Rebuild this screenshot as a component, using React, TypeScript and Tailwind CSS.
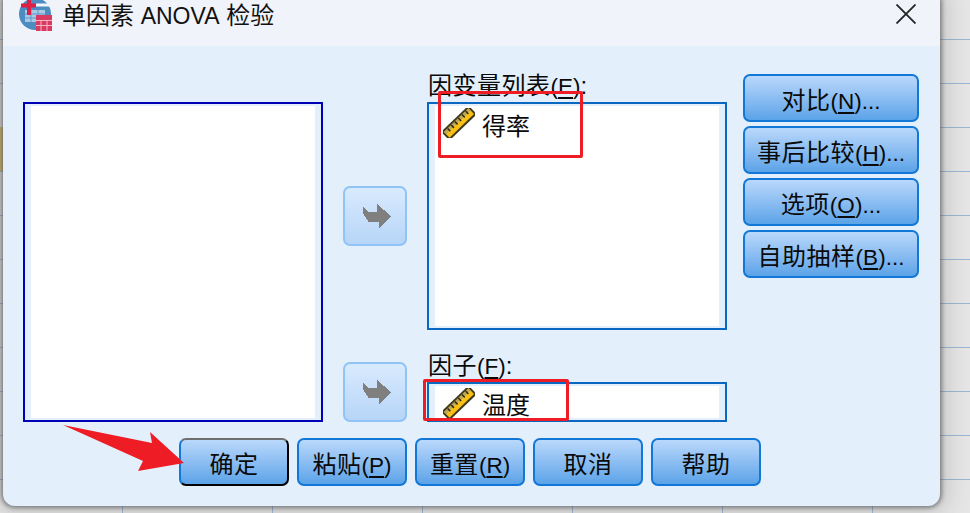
const cjk = "font-['Liberation_Sans','Noto_Sans_CJK_SC',sans-serif]";

function Ruler() {
  return (
    <svg width="32" height="30" viewBox="0 0 32 30" className="shrink-0">
      <g transform="rotate(-44 16 15)">
        <rect x="-3" y="9" width="38" height="12" fill="#3f3a1c" />
        <rect x="-1" y="11" width="34" height="8" fill="#fbc014" />
        <rect x="-1" y="11" width="34" height="3" fill="#b9a662" />
        <path d="M4 11v4M9 11v4M14 11v4M19 11v4M24 11v4M29 11v4" stroke="#2f2a12" strokeWidth="1.500" />
      </g>
    </svg>
  );
}

function MoveArrow() {
  return (
    <svg width="28" height="24" viewBox="0 0 84 72" shapeRendering="crispEdges">
      <polygon fill="#7f7f7f" points="0,6 16,25 42,25 42,0 84,36 49,72 49,53 16,53 0,28" />
    </svg>
  );
}

function MoveButton({ className }: { className: string }) {
  return (
    <div className={`flex h-[60px] w-[64px] items-center justify-center rounded-[7px] border-2 border-[#90c4f4] bg-gradient-to-b from-[#d9eafd] to-[#b6d5f8] pl-[3px] ${className}`}>
      <MoveArrow />
    </div>
  );
}

// mnemonic like (N)... the latin part runs a bit narrower than the CJK text
function Key({ k, tail = "" }: { k: string; tail?: string }) {
  return (
    <span className="text-[22.500px] tracking-normal">
      (<span className="underline underline-offset-[3px]">{k}</span>){tail}
    </span>
  );
}

function DlgButton({ children, width = "w-full", isDefault = false }: { children: React.ReactNode; width?: string; isDefault?: boolean }) {
  const edge = isDefault
    ? "border-t-[#6f6f6f] border-r-black border-b-black border-l-[#1278d8]"
    : "border-[#1278d8]";
  return (
    <button className={`flex h-12 ${width} items-center justify-center rounded-[7px] border-2 ${edge} bg-gradient-to-b from-[#bad8fb] to-[#5ba3e8] pt-[6px] text-[24px] leading-none tracking-[0.500px] whitespace-nowrap text-[#0a0a0a]`}>
      <span>{children}</span>
    </button>
  );
}

function AppIcon() {
  return (
    <svg width="36" height="32" viewBox="0 0 36 32" className="shrink-0">
      <circle cx="16" cy="14" r="16" fill="#4d8cc0" />
      <path d="M6 10h20v12H6z" fill="#a9c8e4" />
      <path d="M6 14h20M6 18h20M12 10v12M19 10v12" stroke="#5f97c8" />
      <path d="M2 5.500h15M10 0v15" stroke="#de1f45" strokeWidth="4" />
      <path d="M17 5h13" stroke="#f2f6fb" strokeWidth="3" />
      <rect x="17" y="15" width="16" height="16" fill="#d93a62" />
      <path d="M17 20.500h16M17 25.500h16M22 20v11M28 20v11" stroke="#f4b5c4" />
    </svg>
  );
}

export default function App() {
  return (
    <div
      className={`${cjk} relative h-[513px] w-[970px] overflow-hidden bg-[#e6e6e6] bg-[linear-gradient(to_bottom,#9ab6d3_1px,transparent_1px),linear-gradient(to_right,#9ab6d3_1px,transparent_1px)] bg-[size:100%_44px,150px_100%] bg-[position:0_39px,122px_0]`}
    >
      <div className="absolute top-[127px] left-0 h-[44px] w-[3px] bg-[#d9c27a]" />

      <div className="relative ml-[3px] flex h-[506px] w-[937px] flex-col overflow-hidden rounded-b-[12px] bg-[#e3effb] shadow-[0_0_4px_2px_rgba(60,60,60,0.55),0_0_22px_8px_rgba(120,120,120,0.28)]">
        <div className="flex h-[46px] shrink-0 items-start bg-[#f0f3fa] pl-[16px]">
          <AppIcon />
          <span className="ml-[7px] text-[24px] leading-[32px] text-[#111]">
            单因素 <span className="text-[23px]">ANOVA</span> 检验
          </span>
          <svg width="20" height="20" viewBox="0 0 20 20" className="mt-[4px] ml-auto mr-[24px]">
            <path d="M0.500 0.500l19 19M19.500 0.500l-19 19" stroke="#222" strokeWidth="1.800" />
          </svg>
        </div>

        <div className="flex pt-[28px] pl-[20px]">
          <div className="pt-[28px]">
            <div className="h-[320px] w-[300px] border-2 border-[#0000b4] px-[6px] py-[2px]">
              <div className="h-full bg-white" />
            </div>
          </div>

          <div className="ml-[20px] flex w-[64px] flex-col pt-[112px]">
            <MoveButton className="" />
            <MoveButton className="mt-[116px]" />
          </div>

          <div className="ml-[20px] flex w-[300px] flex-col text-[24px] tracking-[0.500px] text-[#0a0a0a]">
            <div className="h-[28px] pl-[1px] leading-[24px]">因变量列表<Key k="E" />:</div>
            <div className="h-[228px] border-2 border-[#0a68c0] px-[6px] py-[2px]">
              <div className="flex h-full items-start gap-[7px] bg-white pt-[2px] pl-[8px]">
                <Ruler />
                <span className="leading-[38px] tracking-normal">得率</span>
              </div>
            </div>
            <div className="mt-[20px] h-[32px] pl-[1px] leading-[31px]">因子<Key k="F" />:</div>
            <div className="h-[40px] border-2 border-[#0a68c0] px-[6px] py-[2px]">
              <div className="flex h-full items-start gap-[7px] overflow-hidden bg-white pt-[2px] pl-[8px]">
                <Ruler />
                <span className="leading-[35px] tracking-normal">温度</span>
              </div>
            </div>
          </div>

          <div className="ml-[16px] flex w-[176px] flex-col gap-[4px]">
            <DlgButton>对比<Key k="N" tail="..." /></DlgButton>
            <DlgButton>事后比较<Key k="H" tail="..." /></DlgButton>
            <DlgButton>选项<Key k="O" tail="..." /></DlgButton>
            <DlgButton>自助抽样<Key k="B" tail="..." /></DlgButton>
          </div>
        </div>

        <div className="mt-[16px] flex gap-[8px] pl-[176px]">
          <DlgButton width="w-[110px]" isDefault>确定</DlgButton>
          <DlgButton width="w-[110px]">粘贴<Key k="P" /></DlgButton>
          <DlgButton width="w-[110px]">重置<Key k="R" /></DlgButton>
          <DlgButton width="w-[110px]">取消</DlgButton>
          <DlgButton width="w-[110px]">帮助</DlgButton>
        </div>
      </div>

      {/* annotations drawn over the screenshot */}
      <div className="absolute top-[91px] left-[438px] h-[67px] w-[145px] rounded-[2px] border-[3px] border-[#ee1c25]" />
      <div className="absolute top-[379px] left-[423px] h-[42px] w-[146px] rounded-[2px] border-[3px] border-[#ee1c25]" />
      <svg width="970" height="513" className="pointer-events-none absolute top-0 left-0">
        <polygon fill="#ee1c25" points="184,463 150,432 152,443 63,425 143,461 138,471" />
      </svg>
    </div>
  );
}
